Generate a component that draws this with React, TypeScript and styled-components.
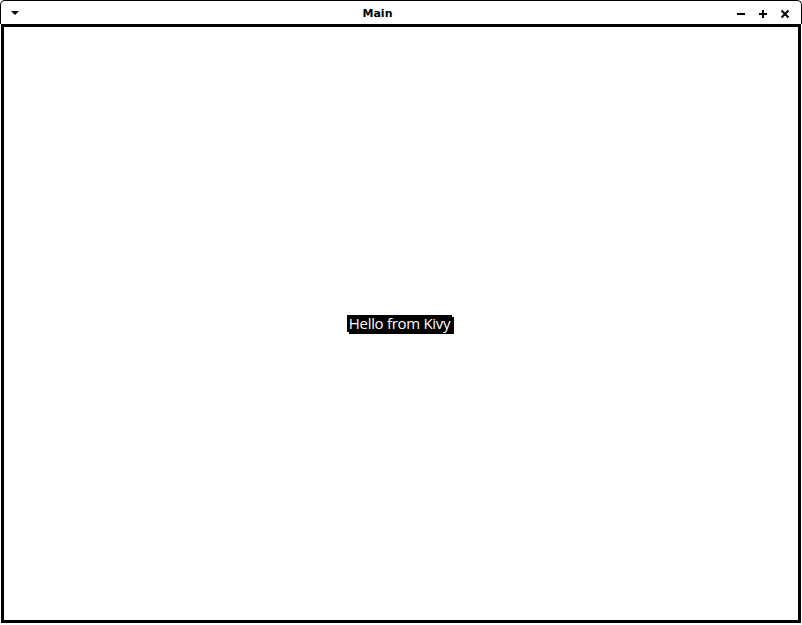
import React from "react";
import styled, { createGlobalStyle } from "styled-components";

const Global = createGlobalStyle`
  html, body { margin: 0; padding: 0; background: #ffffff; }
  body { width: 802px; height: 625px; overflow: hidden; }
  #root { width: 802px; height: 625px; }
`;

const Window = styled.div`
  width: 802px;
  height: 625px;
  display: flex;
  flex-direction: column;
  background: #ffffff;
  box-sizing: border-box;
`;

const TitleBar = styled.div`
  height: 24px;
  box-sizing: border-box;
  border: 1px solid #000;
  border-bottom: none;
  border-radius: 5px 5px 0 0;
  display: flex;
  align-items: center;
  font-family: "DejaVu Sans", sans-serif;
  font-weight: bold;
  font-size: 11px;
  color: #000;
`;

const MenuButton = styled.div`
  width: 28px;
  height: 100%;
  display: flex;
  align-items: center;
  justify-content: center;
  padding-top: 1px;
  box-sizing: border-box;
`;

const Title = styled.div`
  flex: 1;
  text-align: center;
  padding-top: 2px;
`;

const Controls = styled.div`
  display: flex;
  align-items: center;
  gap: 12px;
  padding: 2px 11px 0 10px;
`;

const Ctrl = styled.svg`
  width: 10px;
  height: 10px;
  display: block;
`;

const Frame = styled.div`
  flex: none;
  height: 599px;
  margin: 0 1px 0 1px;
  border: 3px solid #000;
  box-sizing: border-box;
  display: flex;
  align-items: center;
  justify-content: center;
`;

const Label = styled.span`
  font-family: "Open Sans", sans-serif;
  font-size: 15px;
  line-height: 17px;
  color: #fff;
  background: #000;
  padding: 0 2px 0 2px;
  margin: 0 3px 0 0;
  box-shadow: 2px 2px 0 #000;
  letter-spacing: -0.3px;
`;

export default function App() {
  return (
    <>
      <Global />
      <Window>
        <TitleBar>
          <MenuButton>
            <Ctrl viewBox="0 0 10 10">
              <polygon points="1,3 9,3 5,7" fill="#000" />
            </Ctrl>
          </MenuButton>
          <Title>Main</Title>
          <Controls>
            <Ctrl viewBox="0 0 10 10">
              <rect x="1" y="4" width="8" height="2" fill="#000" />
            </Ctrl>
            <Ctrl viewBox="0 0 10 10">
              <rect x="1" y="4" width="8" height="2" fill="#000" />
              <rect x="4" y="1" width="2" height="8" fill="#000" />
            </Ctrl>
            <Ctrl viewBox="0 0 10 10">
              <path d="M1.5 1.5 L8.5 8.5 M8.5 1.5 L1.5 8.5" stroke="#000" strokeWidth="2" />
            </Ctrl>
          </Controls>
        </TitleBar>
        <Frame>
          <Label>Hello from Kivy</Label>
        </Frame>
      </Window>
    </>
  );
}
